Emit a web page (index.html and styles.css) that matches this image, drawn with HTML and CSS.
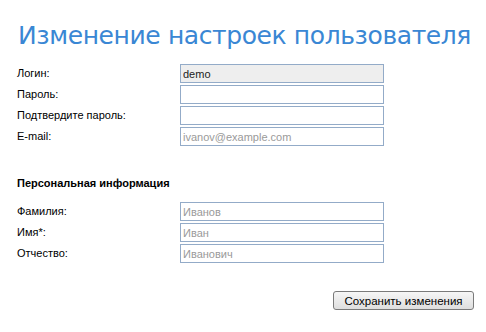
FILE: index.html
```html
<!DOCTYPE html>
<html lang="ru">
<head>
    <meta charset="UTF-8">
    <title>Изменение настроек пользователя</title>
    <link rel="stylesheet" href="styles.css">
</head>
<body>
    <div class="page">
        <h1>Изменение настроек пользователя</h1>

        <div class="form-group">
            <label for="login">Логин:</label>
            <input type="text" id="login" value="demo" disabled class="readonly">
            <label for="password">Пароль:</label>
            <input type="password" id="password">
            <label for="re_password">Подтвердите пароль:</label>
            <input type="password" id="re_password">
            <label for="email">E-mail:</label>
            <input type="email" id="email" placeholder="ivanov@example.com">
        </div>

        <h2>Персональная информация</h2>

        <div class="form-group">
            <label for="surname">Фамилия:</label>
            <input type="text" id="surname" placeholder="Иванов">
            <label for="name">Имя*:</label>
            <input type="text" id="name" placeholder="Иван">
            <label for="patronymic">Отчество:</label>
            <input type="text" id="patronymic" placeholder="Иванович">
        </div>

        <div class="actions">
            <button type="submit">Сохранить изменения</button>
        </div>
    </div>
</body>
</html>
```

FILE: styles.css
```css
body {
    margin: 0;
    padding: 0;
    background-color: #ffffff;
    font-family: "Liberation Sans", Arial, sans-serif;
    font-size: 11px;
    color: #000000;
}

.page {
    padding: 21px 12px 0 17px;
}

h1 {
    margin: 0 0 13px 1px;
    font-family: "DejaVu Sans", Verdana, sans-serif;
    font-size: 25px;
    font-weight: normal;
    line-height: 30px;
    color: #3a87d4;
    letter-spacing: -0.4px;
    white-space: nowrap;
}

h2 {
    margin: 30px 0 12px 0;
    font-size: 11px;
    font-weight: bold;
    line-height: 14px;
}

.form-group {
    display: grid;
    grid-template-columns: 163px 204px;
    row-gap: 2px;
    align-items: center;
}

label {
    line-height: 19px;
}

input[type="text"],
input[type="password"],
input[type="email"] {
    box-sizing: border-box;
    width: 204px;
    height: 19px;
    margin: 0;
    padding: 0 2px;
    border: 1px solid #93abc8;
    background-color: #ffffff;
    font-family: "Liberation Sans", Arial, sans-serif;
    font-size: 11px;
    color: #333333;
    outline: none;
}

input::placeholder {
    color: #9a9a9a;
}

input.readonly {
    background-color: #eeeeee;
    color: #222222;
}

.actions {
    display: flex;
    justify-content: flex-end;
    margin-top: 28px;
}

button {
    box-sizing: border-box;
    width: 141px;
    height: 19px;
    padding: 0;
    border: 1px solid #7a7a7a;
    border-radius: 3px;
    background: linear-gradient(#f6f6f6, #dedede);
    font-family: "Liberation Sans", Arial, sans-serif;
    font-size: 11.5px;
    color: #000000;
    cursor: pointer;
}
```
